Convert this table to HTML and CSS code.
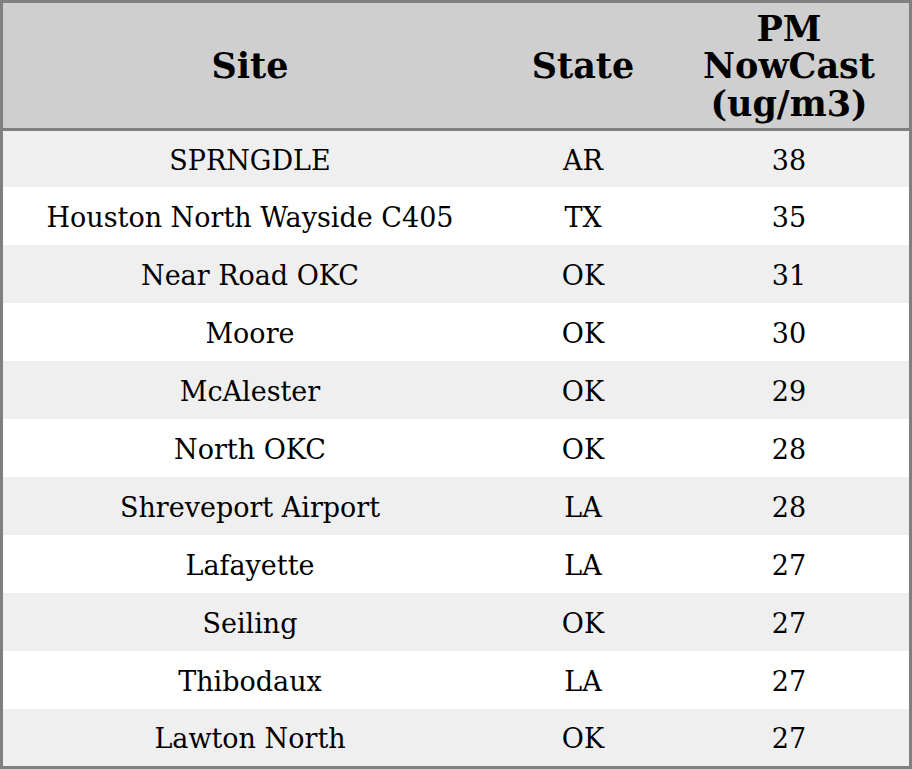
FILE: index.html
```html
<!DOCTYPE html>
<html>
<head>
<meta charset="utf-8">
<link rel="stylesheet" href="styles.css">
</head>
<body>
<table class="aq">
<thead>
<tr><th class="c-site">Site</th><th class="c-state">State</th><th class="c-pm">PM<br>NowCast<br>(ug/m3)</th></tr>
</thead>
<tbody>
<tr class="first"><td>SPRNGDLE</td><td>AR</td><td>38</td></tr>
<tr><td>Houston North Wayside C405</td><td>TX</td><td>35</td></tr>
<tr><td>Near Road OKC</td><td>OK</td><td>31</td></tr>
<tr><td>Moore</td><td>OK</td><td>30</td></tr>
<tr><td>McAlester</td><td>OK</td><td>29</td></tr>
<tr><td>North OKC</td><td>OK</td><td>28</td></tr>
<tr><td>Shreveport Airport</td><td>LA</td><td>28</td></tr>
<tr><td>Lafayette</td><td>LA</td><td>27</td></tr>
<tr><td>Seiling</td><td>OK</td><td>27</td></tr>
<tr><td>Thibodaux</td><td>LA</td><td>27</td></tr>
<tr class="last"><td>Lawton North</td><td>OK</td><td>27</td></tr>
</tbody>
</table>
</body>
</html>
```
FILE: styles.css
```css
html, body {
  margin: 0;
  padding: 0;
  background: #ffffff;
}
.aq {
  width: 912px;
  height: 769px;
  border-collapse: separate;
  border-spacing: 0;
  border: 3px solid #808080;
  box-sizing: border-box;
  table-layout: fixed;
  font-family: "DejaVu Serif", serif;
  color: #000;
}
.aq th {
  background: #cfcfcf;
  font-weight: bold;
  font-size: 35px;
  line-height: 37.5px;
  height: 128px;
  padding: 1px 0 0 0;
  box-sizing: border-box;
  text-align: center;
  vertical-align: middle;
  border-bottom: 3px solid #808080;
}
.c-site { width: 494px; }
.c-state { width: 172px; }
.c-pm { width: 240px; }
.aq td {
  font-size: 27px;
  line-height: 32px;
  padding: 3px 0 0 0;
  box-sizing: border-box;
  text-align: center;
  vertical-align: middle;
  height: 58px;
}
.aq tbody tr.first td { height: 56px; }
.aq tbody tr.last td { height: 57px; }
.aq tbody tr:nth-child(odd) td { background: #efefef; }
.aq tbody tr:nth-child(even) td { background: #ffffff; }
```
